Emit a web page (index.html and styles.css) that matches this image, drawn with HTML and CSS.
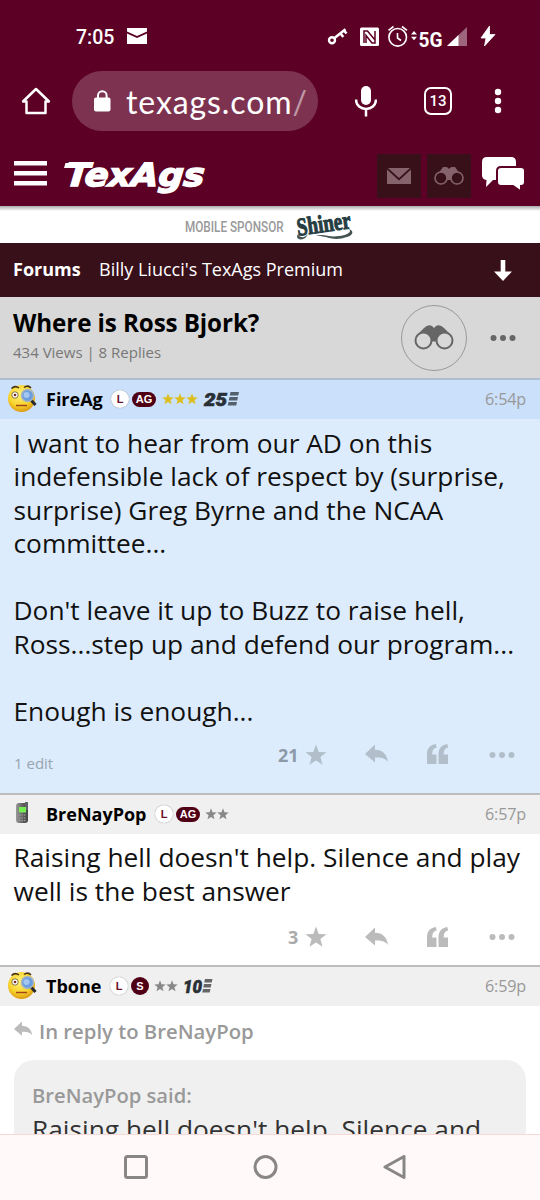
FILE: index.html
```html
<!DOCTYPE html>
<html lang="en">
<head>
<meta charset="utf-8">
<title>Where is Ross Bjork? | TexAgs</title>
<link rel="stylesheet" href="styles.css">
</head>
<body>
<svg class="defs" width="0" height="0" aria-hidden="true">
  <defs>
    <radialGradient id="face" cx=".45" cy=".35" r=".65"><stop offset="0" stop-color="#fff27a"/><stop offset=".65" stop-color="#f8d32c"/><stop offset="1" stop-color="#dd9a12"/></radialGradient>
    <linearGradient id="phone" x1="0" x2="1"><stop offset="0" stop-color="#9a9a9a"/><stop offset=".5" stop-color="#666"/><stop offset="1" stop-color="#444"/></linearGradient>
    <symbol id="star" viewBox="0 0 22 22"><path d="M11 .5l2.700 7.400 7.800.3-6.100 4.900 2.100 7.600L11 16.400l-6.500 4.300 2.100-7.600L.5 8.200l7.800-.3z"/></symbol>
    <symbol id="reply" viewBox="0 0 24 20"><path d="M0 10 10 .5v5.300c7.500 0 12 4.500 13 12.200-3-4-7-4.800-13-4.500v5z"/></symbol>
    <symbol id="quote" viewBox="0 0 22 20"><path d="M0 20V10C0 4.500 3 .8 8.800 0l.9 3.500C6.800 4.200 5.300 6 5.200 10.500h4.300V20zM11.500 20V10c0-5.500 3-9.200 8.800-10l.9 3.500c-2.900.7-4.400 2.500-4.500 7H21V20z"/></symbol>
    <symbol id="dots" viewBox="0 0 26 8"><circle cx="3.500" cy="4" r="3"/><circle cx="13" cy="4" r="3"/><circle cx="22.500" cy="4" r="3"/></symbol>
    <symbol id="monocle" viewBox="0 0 30 30">
      <circle cx="14.500" cy="15.500" r="13.500" fill="url(#face)"/>
      <path d="M4.500 5.500Q8 2 12 5M17 4.500q4-3 7 .5" fill="none" stroke="#4a3210" stroke-width="1.500"/>
      <circle cx="8" cy="12" r="3.200" fill="#fff" stroke="#70551a" stroke-width=".8"/><circle cx="8" cy="12" r="1.300" fill="#752d22"/>
      <path d="m24 17 4.500 5" stroke="#26282c" stroke-width="3"/>
      <circle cx="20.500" cy="12.500" r="6" fill="#6b9ee0" stroke="#a9b6bd" stroke-width="1.500"/><circle cx="19.500" cy="12" r="3" fill="#a4c6ef"/>
      <path d="M9 22.500h11" stroke="#a0451c" stroke-width="1.500"/>
    </symbol>
  </defs>
</svg>
<div class="screen">
  <header class="chrome">
    <div class="status">
      <span class="clock">7:05</span>
      <svg class="mail" width="20" height="16" viewBox="0 0 20 16" fill="#fff"><path d="M0 0h20v3.500L10 8 0 3.500zM0 5.500 10 10l10-4.500V16H0z"/></svg>
      <svg class="indicators" width="172" height="32" viewBox="326 21 172 32" fill="#fff">
        <g fill="none" stroke="#fff"><circle cx="332" cy="40.300" r="3" stroke-width="2.400"/><path d="m334.500 38 11-8.700M340.500 33.500l2.800 3.500M344 30.500l2.500 3" stroke-width="2.600"/></g>
        <rect x="360" y="27.500" width="19" height="18.500" rx="1.500"/><path d="M364 43V31h3.500l7.500 9M375 31v12h-3l-6-7.500V43" fill="none" stroke="#5c0025" stroke-width="1.500"/>
        <g fill="none" stroke="#fff" stroke-width="1.600"><circle cx="397.700" cy="37.300" r="8.800"/><path d="M397.500 33v5l3.500 2.500M388.500 30.300l5-3.800M407 30.300l-5-3.800"/></g>
        <path d="m411 34.500 3-3.500 3 3.500zM411 36.800h6l-3 3.500z"/>
        <text x="418.500" y="46.800" class="five" textLength="24" lengthAdjust="spacingAndGlyphs">5G</text>
        <path d="M447 46 467 27v19z" opacity=".4"/><path d="m447 46 11.500-11v11z"/>
        <path d="m489.500 26-8.500 12h5l-1.500 8L495 34.500h-5.500z" stroke="#fff" stroke-width=".8"/>
      </svg>
    </div>
    <div class="browser">
      <svg class="home" width="28" height="30" viewBox="0 0 28 30" fill="none" stroke="#fff" stroke-width="2.500"><path d="M1 15.500 14 3l13 12.500h-3.500V27h-19V15.500z" stroke-linejoin="round"/></svg>
      <div class="omnibox">
        <svg width="17" height="22" viewBox="0 0 17 22"><rect y="7.500" width="16.500" height="14" rx="2" fill="#fff"/><path d="M4 8V5.500a4.300 4.300 0 0 1 8.600 0V8" fill="none" stroke="#fff" stroke-width="2"/></svg>
        <span class="url">texags.com<i>/</i></span>
      </div>
      <svg class="mic" width="22" height="31" viewBox="0 0 22 31"><rect x="6" width="10" height="19" rx="5" fill="#fff"/><path d="M1 13.500c0 12.500 20 12.500 20 0M11 23v7.500" fill="none" stroke="#fff" stroke-width="2.500"/></svg>
      <span class="tabs">13</span>
      <svg class="kebab" width="8" height="26" viewBox="0 0 8 26" fill="#fff"><circle cx="4" cy="4" r="3.200"/><circle cx="4" cy="13" r="3.200"/><circle cx="4" cy="22" r="3.200"/></svg>
    </div>
  </header>

  <nav class="site">
    <svg class="menu" width="33" height="25" viewBox="0 0 33 25" fill="#fff"><path d="M0 0h33v4.500H0zM0 10h33v4.500H0zM0 20h33v4.500H0z"/></svg>
    <svg class="logo" width="142" height="40" viewBox="0 0 142 40"><text x="0" y="27" transform="translate(3 0) skewX(-5)" textLength="139" lengthAdjust="spacingAndGlyphs">TexAgs</text><path d="M1.500 4h27l-1 5H0z" fill="#fff"/></svg>
    <div class="tile"><svg width="24" height="16" viewBox="0 0 24 16" fill="#84636d"><path d="M1 0h22L12 10zM0 1.500l12 11 12-11V16H0z"/></svg></div>
    <div class="tile"><svg width="30" height="18" viewBox="0 0 30 18"><path d="M4 7 9 0q4-1 6 2 2-3 6-2l5 7-8 6h-6z" fill="#84636d"/><g fill="#38101a" stroke="#84636d" stroke-width="1.600"><circle cx="7" cy="11" r="6"/><circle cx="23" cy="11" r="6"/></g></svg></div>
    <svg class="chat" width="44" height="36" viewBox="0 0 44 36"><path d="M6 0h24q5 0 5 5v13q0 5-5 5H12l-7 7 .5-7Q1 22.500 1 18V5q0-5 5-5z" fill="#fff"/><path d="M20 10h20q4 0 4 4v11q0 4-4 4v5.500L32 29H20q-4 0-4-4V14q0-4 4-4z" fill="#fff" stroke="#5c0025" stroke-width="2"/></svg>
  </nav>

  <div class="sponsor">
    <span>MOBILE SPONSOR</span>
    <svg width="58" height="34" viewBox="0 -2 58 34"><g transform="rotate(-8 28 16)"><text x="1" y="22" textLength="54" lengthAdjust="spacingAndGlyphs">Shiner</text></g><path d="M2 24Q-1 29 5 29.500 10 29 12 24 9 28 6 27 3 27 2 24M20 26c8-3 13 2 23 0 9-1 14-5 9-7 6 1 6 6-1 8-8 3-16 2-21 0-5-1-7-1-10-1z" fill="#465553"/></svg>
  </div>

  <div class="crumbs">
    <b>Forums</b><span>Billy Liucci's TexAgs Premium</span>
    <svg width="18" height="21" viewBox="0 0 18 21" fill="#fff"><path d="M6.700 0h4.600v11.500H18l-9 9.500-9-9.500h6.700z"/></svg>
  </div>

  <section class="topic">
    <div class="topic-text"><h1>Where is Ross Bjork?</h1><p>434 Views | 8 Replies</p></div>
    <div class="watch"><svg width="40" height="25" viewBox="0 0 40 25"><path d="M2 11 10 3q4-4 8-2l2 2 2-2q4-2 8 2l8 8-13 7-3-1.500h-4L15 18z" fill="#666"/><g fill="#d8d8d8" stroke="#666" stroke-width="2"><circle cx="9.500" cy="15.500" r="8"/><circle cx="30.500" cy="15.500" r="8"/></g></svg></div>
    <svg class="topic-more" width="26" height="8" fill="#666"><use href="#dots"/></svg>
  </section>

  <article class="post op">
    <div class="post-head">
      <svg class="avatar" width="30" height="30"><use href="#monocle"/></svg>
      <b class="name n1">FireAg</b><span class="badge light">L</span><span class="badge ag">AG</span>
      <span class="stars gold"><svg><use href="#star"/></svg><svg><use href="#star"/></svg><svg><use href="#star"/></svg></span>
      <svg class="years" width="36" height="16" viewBox="0 0 36 16"><text x="0" y="14.500" textLength="23" lengthAdjust="spacingAndGlyphs">25</text><path d="M26.500 1H35l-.8 3.500h-8.500zM25.500 6H34l-.8 3.500h-8.500zM24.500 11H33l-.8 3.500h-8.500z" fill="#54606c"/></svg>
      <time>6:54p</time>
    </div>
    <div class="post-text">I want to hear from our AD on this<br>indefensible lack of respect by (surprise,<br>surprise) Greg Byrne and the NCAA<br>committee...<br><br>Don't leave it up to Buzz to raise hell,<br>Ross...step up and defend our program...<br><br>Enough is enough...</div>
    <div class="actions"><span class="edit">1 edit</span><b>21</b><svg class="a-star"><use href="#star"/></svg><svg class="a-reply"><use href="#reply"/></svg><svg class="a-quote"><use href="#quote"/></svg><svg class="a-more"><use href="#dots"/></svg></div>
  </article>

  <article class="post second">
    <div class="post-head">
      <svg class="avatar" width="30" height="30" viewBox="0 0 30 30"><rect x="9" y="5" width="12" height="20" rx="3" fill="url(#phone)"/><path d="M18 4h3v8h-3z" fill="#62626b"/><rect x="12" y="9" width="7" height="5.500" fill="#76ed52"/><path d="M12 17h7M12 20h7M12 22.500h7" stroke="#a3a3a3" stroke-dasharray="1.500 1"/></svg>
      <b class="name n2">BreNayPop</b><span class="badge light">L</span><span class="badge ag">AG</span>
      <span class="stars"><svg><use href="#star"/></svg><svg><use href="#star"/></svg></span>
      <time>6:57p</time>
    </div>
    <div class="post-text">Raising hell doesn't help. Silence and play<br>well is the best answer</div>
    <div class="actions"><b>3</b><svg class="a-star"><use href="#star"/></svg><svg class="a-reply"><use href="#reply"/></svg><svg class="a-quote"><use href="#quote"/></svg><svg class="a-more"><use href="#dots"/></svg></div>
  </article>

  <article class="post third">
    <div class="post-head">
      <svg class="avatar" width="30" height="30"><use href="#monocle"/></svg>
      <b class="name n3">Tbone</b><span class="badge light">L</span><span class="badge s">S</span>
      <span class="stars"><svg><use href="#star"/></svg><svg><use href="#star"/></svg></span>
      <svg class="years" width="31" height="16" viewBox="0 0 31 16"><text x="0" y="14.500" textLength="19" lengthAdjust="spacingAndGlyphs">10</text><path d="M22 1h7.500l-.8 3.500h-7.500zM21 6h7.500l-.8 3.500h-7.500zM20 11h7.500l-.8 3.500h-7.500z" fill="#666"/></svg>
      <time>6:59p</time>
    </div>
    <div class="reply-to"><svg width="19" height="16"><use href="#reply"/></svg><span>In reply to BreNayPop</span></div>
    <blockquote><cite>BreNayPop said:</cite><p>Raising hell doesn't help. Silence and</p></blockquote>
  </article>

  <footer class="system">
    <svg width="24" height="24" viewBox="0 0 24 24"><rect x="1.500" y="1.500" width="21" height="21" rx="2"/></svg>
    <svg width="25" height="24" viewBox="0 0 25 24"><circle cx="12.500" cy="12" r="10.500"/></svg>
    <svg width="23" height="24" viewBox="0 0 23 24"><path d="M2 12 21 1.500v21z"/></svg>
  </footer>
</div>
</body>
</html>
```
FILE: styles.css
```css
* { box-sizing: border-box; }
body { margin: 0; font-family: "Open Sans", "Noto Sans", sans-serif; }
svg { flex: none; display: block; }
.defs { position: absolute; }
.screen { width: 540px; height: 1200px; display: flex; flex-direction: column; overflow: hidden; background: #fff; }
.chrome, .site { background: #5c0025; color: #fff; flex: none; }
.status { height: 72px; display: flex; align-items: center; padding-left: 76px; font-family: Roboto, sans-serif; }
.clock { width: 51px; font-size: 19.5px; font-weight: 500; letter-spacing: 0; padding-top: 2px; }
.indicators { margin-left: 179px; margin-top: 2px; }
.five { font: bold 21px Roboto, sans-serif; }
.browser { height: 72px; display: flex; align-items: flex-start; }
.home { margin: 14px 0 0 22px; }
.omnibox { width: 246px; height: 60px; margin: -1px 0 0 22px; border-radius: 30px; background: #7d3350; display: flex; align-items: center; padding-left: 22px; gap: 15px; }
.url { font-family: Lato, "Open Sans", sans-serif; font-size: 32px; letter-spacing: .9px; padding-top: 1px; white-space: nowrap; }
.url i { color: #bf99a7; font-style: normal; }
.mic { margin: 14px 0 0 37px; }
.tabs { width: 28px; height: 28px; margin: 15px 0 0 47px; border: 2.5px solid #fff; border-radius: 7px; font: 500 15px/24px Roboto, sans-serif; text-align: center; }
.kebab { margin: 16px 0 0 42px; }
.site { height: 62px; display: flex; align-items: flex-start; }
.menu { margin: 17px 0 0 14px; }
.logo { margin: 15px 0 0 17px; overflow: visible; }
.logo text { font: italic bold 32px "DejaVu Sans", sans-serif; fill: #fff; stroke: #fff; stroke-width: 1.5px; }
.tile { width: 44px; height: 44px; background: #38101a; display: flex; align-items: center; justify-content: center; margin: 10px 0 0 6px; }
.logo + .tile { margin-left: 171px; }
.chat { margin: 13px 0 0 10px; }
.sponsor { flex: none; height: 37px; display: flex; align-items: center; padding-left: 185px; background: linear-gradient(#aaa, #fff 5px); color: #999; }
.sponsor span { width: 111px; font: 500 14.5px Roboto, sans-serif; white-space: nowrap; transform: scaleX(.81); transform-origin: left; padding-top: 5px; }
.sponsor text { font: bold 25px "Liberation Serif", serif; fill: #263d42; stroke: #263d42; stroke-width: 1px; }
.crumbs { flex: none; height: 54px; background: #38101a; color: #fff; display: flex; align-items: center; padding: 0 28px 3px 13px; font-size: 18px; }
.crumbs b { width: 86px; }
.crumbs svg { margin-left: auto; margin-top: 4px; }
.topic { flex: none; height: 81px; background: #d8d8d8; display: flex; align-items: center; padding-left: 13px; }
.topic-text { width: 388px; align-self: stretch; }
h1 { font-size: 24.2px; line-height: 32px; margin: 10px 0 0; letter-spacing: -.1px; }
.topic p { font-size: 15px; line-height: 22px; margin: 2px 0 0; color: #777; }
.watch { width: 66px; height: 66px; border: 1px solid #999; border-radius: 50%; display: grid; place-items: center; }
.topic-more { margin-left: 23px; }
.post { flex: none; border-top: 2px solid #bdbdbd; background: #fff; display: flex; flex-direction: column; }
.post-head { flex: none; height: 39px; display: flex; align-items: center; padding: 0 14px 1px 7px; background: #f0f0f0; }
.op { height: 415px; background: #ddecfc; border-color: #afbdd3; }
.op .post-head { background: #cbe0fb; padding-bottom: 1px; }
.second { height: 172px; }
.third { flex: 1; min-height: 0; overflow: hidden; }
.avatar { margin-right: 9px; margin-top: -3px; }
.name { font-size: 18px; white-space: nowrap; }
.n1 { width: 65px; } .n2 { width: 109px; } .n3 { width: 64px; }
.badge { height: 18px; width: 18px; border-radius: 9px; font: bold 11px/18px "Liberation Sans", sans-serif; text-align: center; color: #fff; background: #500015; }
.badge.light { background: #fff; color: #6b1429; box-shadow: 0 0 1px #777; margin-right: 3px; }
.badge.ag { width: 24px; height: 15px; line-height: 15px; }
.stars { display: flex; margin-left: 5px; }
.stars svg { width: 12px; height: 12px; fill: #888; }
.gold svg { fill: #dcbf1c; }
.gold { margin-left: 6px; }
.years { margin-left: 6px; overflow: visible; }
.third .years { margin-left: 5px; }
.years text { font: italic 900 18px Roboto, sans-serif; fill: #282f35; stroke: #282f35; stroke-width: .6px; }
time { margin-left: auto; font-size: 16.2px; letter-spacing: -.2px; color: #999; }
.post-text { padding: 7.5px 0 0 13.5px; font-size: 26.3px; line-height: 33.55px; white-space: nowrap; color: #111; }
.second .post-text { padding-top: 7px; }
.actions { margin-top: auto; height: 62px; display: flex; align-items: center; fill: #bbb; padding: 0 25px 0 14px; }
.actions b { margin-left: auto; width: 27px; font-size: 18px; color: #aaa; }
.second .actions b { width: 17px; }
.op .actions { height: 66px; align-items: flex-start; fill: #b2bfca; padding-top: 16px; }
.op .actions b { color: #8d99a8; width: 27px; line-height: 22px; }
.edit { font-size: 15px; line-height: 20px; color: #98a4b0; padding-top: 9px; }
.a-star { width: 22px; height: 22px; margin-right: 38px; }
.a-reply { width: 24px; height: 20px; margin-right: 38px; }
.a-quote { width: 22px; height: 20px; margin-right: 40px; }
.a-more { width: 26px; height: 8px; }
.op .a-more { margin-top: 7px; }
.reply-to { flex: none; display: flex; gap: 6px; padding: 10px 0 0 14px; height: 54px; fill: #bbb; color: #999; font-size: 20.3px; font-weight: 600; line-height: 30px; }
.reply-to svg { margin-top: 5px; }
blockquote { flex: none; margin: 0 14px; height: 160px; border-radius: 20px; background: #f0f0f0; padding: 20px 18px; white-space: nowrap; }
cite { display: block; font-style: normal; font-size: 20.2px; font-weight: 600; line-height: 30px; color: #999; }
blockquote p { margin: 3px 0; font-size: 26.3px; line-height: 33.6px; color: #333; }
.system { flex: none; height: 66px; border-top: 1px solid #f8d8d4; background: #fffaf9; display: flex; align-items: center; gap: 105px; padding: 0 0 2px 124px; }
.system svg { fill: none; stroke: #898686; stroke-width: 3; stroke-linejoin: round; }
```
